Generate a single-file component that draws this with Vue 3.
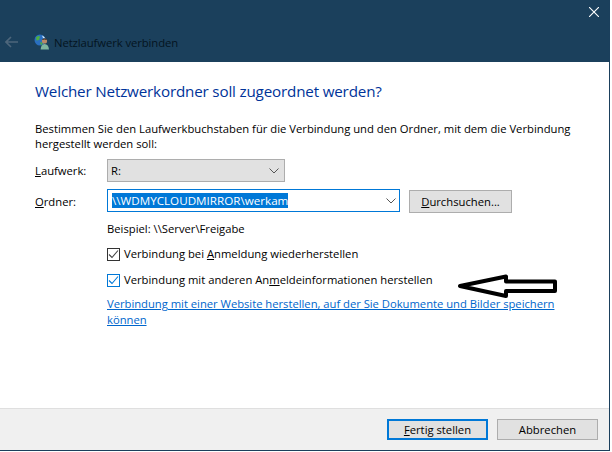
<template>
  <div class="window">
    <header class="titlebar">
      <div class="close-row">
        <svg class="close" width="10" height="10" viewBox="0 0 10 10"><path d="M0 0L10 10M10 0L0 10" stroke="#fff" stroke-width="1.1" fill="none"/></svg>
      </div>
      <div class="nav-row">
        <svg class="back" width="13" height="12" viewBox="0 0 13 12"><path d="M6 1L1 6L6 11M1 6H13" stroke="#4d667b" stroke-width="1.6" fill="none"/></svg>
        <svg class="wizard-icon" width="16" height="16" viewBox="0 0 16 16">
          <circle cx="6" cy="6" r="5.5" fill="#2a6fc0"/>
          <path d="M2 3.5Q4 1 6 2.5L5 6L2.5 6.5ZM6 8L9 9L7 11.5Z" fill="#4fae3f"/>
          <path d="M8 1.5Q10 2 11 4L9 4Z" fill="#d8ecf8"/>
          <circle cx="10.5" cy="7" r="2.6" fill="#b88a68"/>
          <path d="M8 5.6Q10.5 3.4 13 5.6L12.4 6Q10.5 5.2 8.6 6Z" fill="#4a3426"/>
          <path d="M6.6 15.5Q7 10.4 10.5 10Q14.6 10.4 15 15.5Z" fill="#7fb5a0"/>
        </svg>
        <span class="wizard-title">Netzlaufwerk verbinden</span>
      </div>
    </header>

    <main class="content">
      <h1 class="heading">Welcher Netzwerkordner soll zugeordnet werden?</h1>
      <p class="intro">Bestimmen Sie den Laufwerkbuchstaben für die Verbindung und den Ordner, mit dem die Verbindung hergestellt werden soll:</p>

      <div class="form">
        <label class="field-label"><u>L</u>aufwerk:</label>
        <div class="row">
          <div class="select">
            <span>R:</span>
            <svg class="chev" width="10" height="6" viewBox="0 0 10 6"><path d="M0.5 0.5L5 5L9.5 0.5" stroke="#555" fill="none"/></svg>
          </div>
        </div>

        <label class="field-label"><u>O</u>rdner:</label>
        <div class="row">
          <div class="combo">
            <span class="selected">\\WDMYCLOUDMIRROR\werkam</span>
            <svg class="chev" width="10" height="6" viewBox="0 0 10 6"><path d="M0.5 0.5L5 5L9.5 0.5" stroke="#555" fill="none"/></svg>
          </div>
          <button class="btn browse"><u>D</u>urchsuchen...</button>
        </div>

        <div class="options">
          <div class="example">Beispiel: \\Server\Freigabe</div>
          <div class="check-row first">
            <span class="box"><svg width="11" height="11" viewBox="0 0 11 11"><path d="M1 5.5L4 8.5L10 1.5" stroke="#444" stroke-width="1.1" fill="none"/></svg></span>
            <span>Verbindung bei <u>A</u>nmeldung wiederherstellen</span>
          </div>
          <div class="check-row second">
            <span class="box active"><svg width="11" height="11" viewBox="0 0 11 11"><path d="M1 5.5L4 8.5L10 1.5" stroke="#0078d7" stroke-width="1.1" fill="none"/></svg></span>
            <span>Verbindung mit anderen An<u>m</u>eldeinformationen herstellen</span>
          </div>
          <a class="link">Verbindung mit einer Website herstellen, auf der Sie Dokumente und Bilder speichern können</a>
        </div>
      </div>

      <svg class="annotation" width="102" height="26" viewBox="0 0 102 26">
        <path d="M3 13L49 3.5V8.5H98V18H49V23Z" fill="#fff" stroke="#000" stroke-width="4" stroke-linejoin="round"/>
      </svg>
    </main>

    <footer class="footer">
      <button class="btn primary"><u>F</u>ertig stellen</button>
      <button class="btn">Abbrechen</button>
    </footer>
  </div>
</template>

<script setup>
</script>

<style>
html, body { margin: 0; background: #fff; }
</style>

<style scoped>
.window {
  width: 610px;
  height: 451px;
  display: flex;
  flex-direction: column;
  box-sizing: border-box;
  border-right: 1px solid #1b3f5c;
  border-bottom: 1px solid #1b3f5c;
  font-family: "Open Sans", "Noto Sans", sans-serif;
  font-size: 11.25px;
  color: #000;
  background: #fff;
}
.titlebar {
  height: 62px;
  flex: none;
  background: #1b405c;
  display: flex;
  flex-direction: column;
}
.close-row {
  display: flex;
  justify-content: flex-end;
  padding: 7px 10px 0 0;
  height: 28px;
  box-sizing: border-box;
}
.nav-row {
  display: flex;
  align-items: center;
  height: 28px;
  padding-left: 5px;
}
.wizard-icon { margin-left: 16px; }
.wizard-title { margin-left: 4px; font-size: 11.3px; letter-spacing: -0.09px; color: #04141f; }
.content {
  flex: 1;
  position: relative;
  padding: 19px 0 0 35px;
}
.heading {
  margin: 0;
  font-size: 15.2px;
  font-weight: 400;
  line-height: 21px;
  color: #003399;
  letter-spacing: -0.17px;
}
.intro {
  margin: 19px 0 0;
  width: 545px;
  line-height: 15px;
}
.form {
  margin-top: 8px;
  display: grid;
  grid-template-columns: 72px 1fr;
  row-gap: 7px;
}
.field-label { align-self: center; }
.row {
  display: flex;
  align-items: flex-start;
  gap: 9px;
}
.select, .combo {
  display: flex;
  align-items: center;
  justify-content: space-between;
  box-sizing: border-box;
  height: 23px;
}
.select {
  width: 178px;
  background: #e1e1e1;
  border: 1px solid #adadad;
  padding: 0 5px 0 3px;
}
.combo {
  width: 293px;
  border: 1px solid #0078d7;
  padding: 0 3px 0 4px;
}
.selected {
  background: #0078d7;
  color: #fff;
  font-size: 11.65px;
  line-height: 15px;
}
.btn {
  box-sizing: border-box;
  height: 23px;
  width: 103px;
  background: #e1e1e1;
  border: 1px solid #adadad;
  font: inherit;
  color: #000;
  padding: 0;
}
.browse { margin-top: 1px; }
.options {
  grid-column: 2;
  padding-top: 1px;
}
.example { line-height: 16px; }
.check-row {
  display: flex;
  align-items: center;
  gap: 4px;
  line-height: 16px;
}
.first { margin-top: 9px; }
.second { margin-top: 10px; }
.box {
  box-sizing: border-box;
  width: 13px;
  height: 13px;
  border: 1px solid #333;
  display: flex;
  flex: none;
}
.box.active { border-color: #0078d7; }
.link {
  display: block;
  margin-top: 8px;
  width: 455px;
  line-height: 16px;
  color: #0066cc;
  letter-spacing: -0.025px;
  text-decoration: underline;
}
.annotation {
  position: absolute;
  left: 457px;
  top: 211px;
}
.footer {
  flex: none;
  height: 42px;
  box-sizing: border-box;
  background: #f0f0f0;
  border-top: 1px solid #dfdfdf;
  display: flex;
  justify-content: flex-end;
  align-items: center;
  gap: 9px;
  padding-right: 11px;
}
.footer .btn { width: 101px; height: 21px; }
.primary { border: 2px solid #0078d7; }
</style>
